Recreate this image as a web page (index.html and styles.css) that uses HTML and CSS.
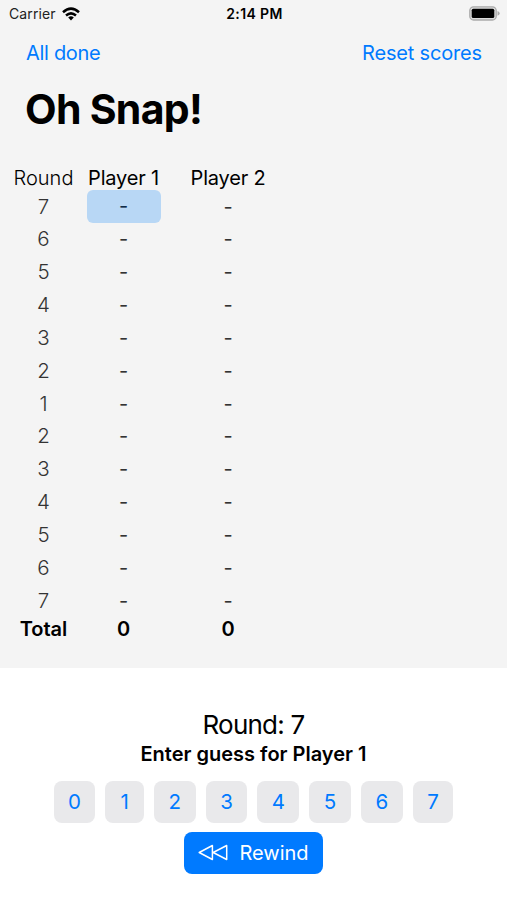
FILE: index.html
```html
<!DOCTYPE html>
<html lang="en">
<head>
<meta charset="utf-8">
<title>Oh Snap!</title>
<link rel="stylesheet" href="styles.css">
</head>
<body>
<main class="scores">
  <header class="status">
    <div class="carrier"><span>Carrier</span>
      <svg class="wifi" viewBox="0 0 18 14" width="18" height="14" fill="none" stroke="#000" stroke-width="2.5"><path d="M1 5.2Q9-1.9 17 5.2M4 8.5Q9 4.2 14 8.5"/><path d="M6.2 10.4Q9 8.2 11.8 10.4L9 13.4Z" fill="#000" stroke="none"/></svg>
    </div>
    <span class="time">2:14 PM</span>
    <svg class="battery" viewBox="0 0 31 15" width="31" height="15"><rect x=".8" y=".8" width="26.4" height="13.2" rx="3.8" fill="#ddd" stroke="#aaa" stroke-width="1.3"/><rect x="2.7" y="2.7" width="22.6" height="9.4" rx="1.6"/><path d="M28.5 5Q30.7 6 30.7 7.4T28.5 9.8Z" fill="#aaa"/></svg>
  </header>
  <nav class="nav"><a class="done">All done</a><a class="reset">Reset scores</a></nav>
  <h1>Oh Snap!</h1>
  <table>
    <thead><tr><th class="round-head">Round</th><th>Player 1</th><th>Player 2</th></tr></thead>
    <tbody>
      <tr><td>7</td><td><span class="current">-</span></td><td>-</td></tr>
      <tr><td>6</td><td>-</td><td>-</td></tr>
      <tr><td>5</td><td>-</td><td>-</td></tr>
      <tr><td>4</td><td>-</td><td>-</td></tr>
      <tr><td>3</td><td>-</td><td>-</td></tr>
      <tr><td>2</td><td>-</td><td>-</td></tr>
      <tr><td>1</td><td>-</td><td>-</td></tr>
      <tr><td>2</td><td>-</td><td>-</td></tr>
      <tr><td>3</td><td>-</td><td>-</td></tr>
      <tr><td>4</td><td>-</td><td>-</td></tr>
      <tr><td>5</td><td>-</td><td>-</td></tr>
      <tr><td>6</td><td>-</td><td>-</td></tr>
      <tr><td>7</td><td>-</td><td>-</td></tr>
    </tbody>
    <tfoot><tr><td class="total">Total</td><td>0</td><td>0</td></tr></tfoot>
  </table>
</main>
<section class="entry">
  <h2>Round: 7</h2>
  <p class="prompt">Enter guess for Player 1</p>
  <div class="keys">
    <button>0</button><button class="one">1</button><button>2</button><button>3</button><button>4</button><button>5</button><button>6</button><button class="seven">7</button>
  </div>
  <button class="rewind"><svg viewBox="0 0 30 18" width="30" height="18" fill="none" stroke="#fff" stroke-width="1.5" stroke-linejoin="round"><path d="M14.4 1.5V15.5L1.2 8.5ZM28.7 1.5V15.5L15.2 8.5Z"/></svg><span>Rewind</span></button>
</section>
</body>
</html>
```
FILE: styles.css
```css
* { box-sizing: border-box; }
body { margin: 0; width: 507px; height: 900px; overflow: hidden; background: #fff; color: #000; font-family: Inter, sans-serif; font-size: 20px; display: flex; flex-direction: column; }
.scores { height: 668px; flex: none; background: #f4f4f4; }
.status { height: 27px; padding: 0 7px 0 9px; display: grid; grid-template-columns: 1fr auto 1fr; align-items: center; }
.carrier { display: flex; align-items: center; gap: 6px; font-size: 14px; letter-spacing: .1px; color: #222; }
.time { font-size: 14px; font-weight: 600; letter-spacing: .4px; }
.battery { justify-self: end; }
.nav { height: 52px; padding: 0 25px 0 26px; display: flex; justify-content: space-between; align-items: center; color: #007aff; }
.done { letter-spacing: -.3px; }
.reset { letter-spacing: -.17px; }
h1 { margin: 0; padding-left: 25px; height: 59px; line-height: 60px; font-size: 41px; font-weight: 700; letter-spacing: -.7px; }
table { margin: 28px 0 0 8px; width: 280px; border-collapse: collapse; table-layout: fixed; text-align: center; }
th, td { padding: 0; }
th { height: 24px; line-height: 23px; font-weight: 400; letter-spacing: -.2px; white-space: nowrap; }
th:first-child { width: 71px; }
th:nth-child(2) { width: 89px; }
th:nth-child(3) { width: 120px; }
.round-head { font-weight: 300; }
thead .round-head { font-weight: 300; letter-spacing: 0; }
tbody tr { height: 32.85px; }
tbody td { line-height: 32px; color: #333; }
tbody td:first-child { font-size: 20.5px; font-weight: 300; }
.current { display: block; width: 74px; height: 33px; margin: 0 auto; border-radius: 6px; background: #b8d7f5; color: #102c48; }
tfoot td { height: 24px; line-height: 24px; font-weight: 600; }
.entry { flex: 1; padding-top: 40px; display: flex; flex-direction: column; align-items: center; }
h2 { margin: 0; font-size: 26px; line-height: 34px; font-weight: 400; letter-spacing: -.75px; }
.prompt { margin: 0; line-height: 24px; font-weight: 600; }
.keys { display: flex; gap: 10px; margin-top: 14.5px; }
button { height: 42px; width: 41.8px; padding: 0; border: 0; border-radius: 8px; background: #e9e9eb; color: #007aff; font: 20.5px/42px Inter, sans-serif; }
.keys .one { width: 38.5px; }
.keys .seven { width: 40.7px; }
.rewind { width: 139px; margin-top: 9.5px; display: flex; align-items: center; justify-content: center; gap: 11px; background: #007aff; color: #fff; font-size: 20px; }
```
